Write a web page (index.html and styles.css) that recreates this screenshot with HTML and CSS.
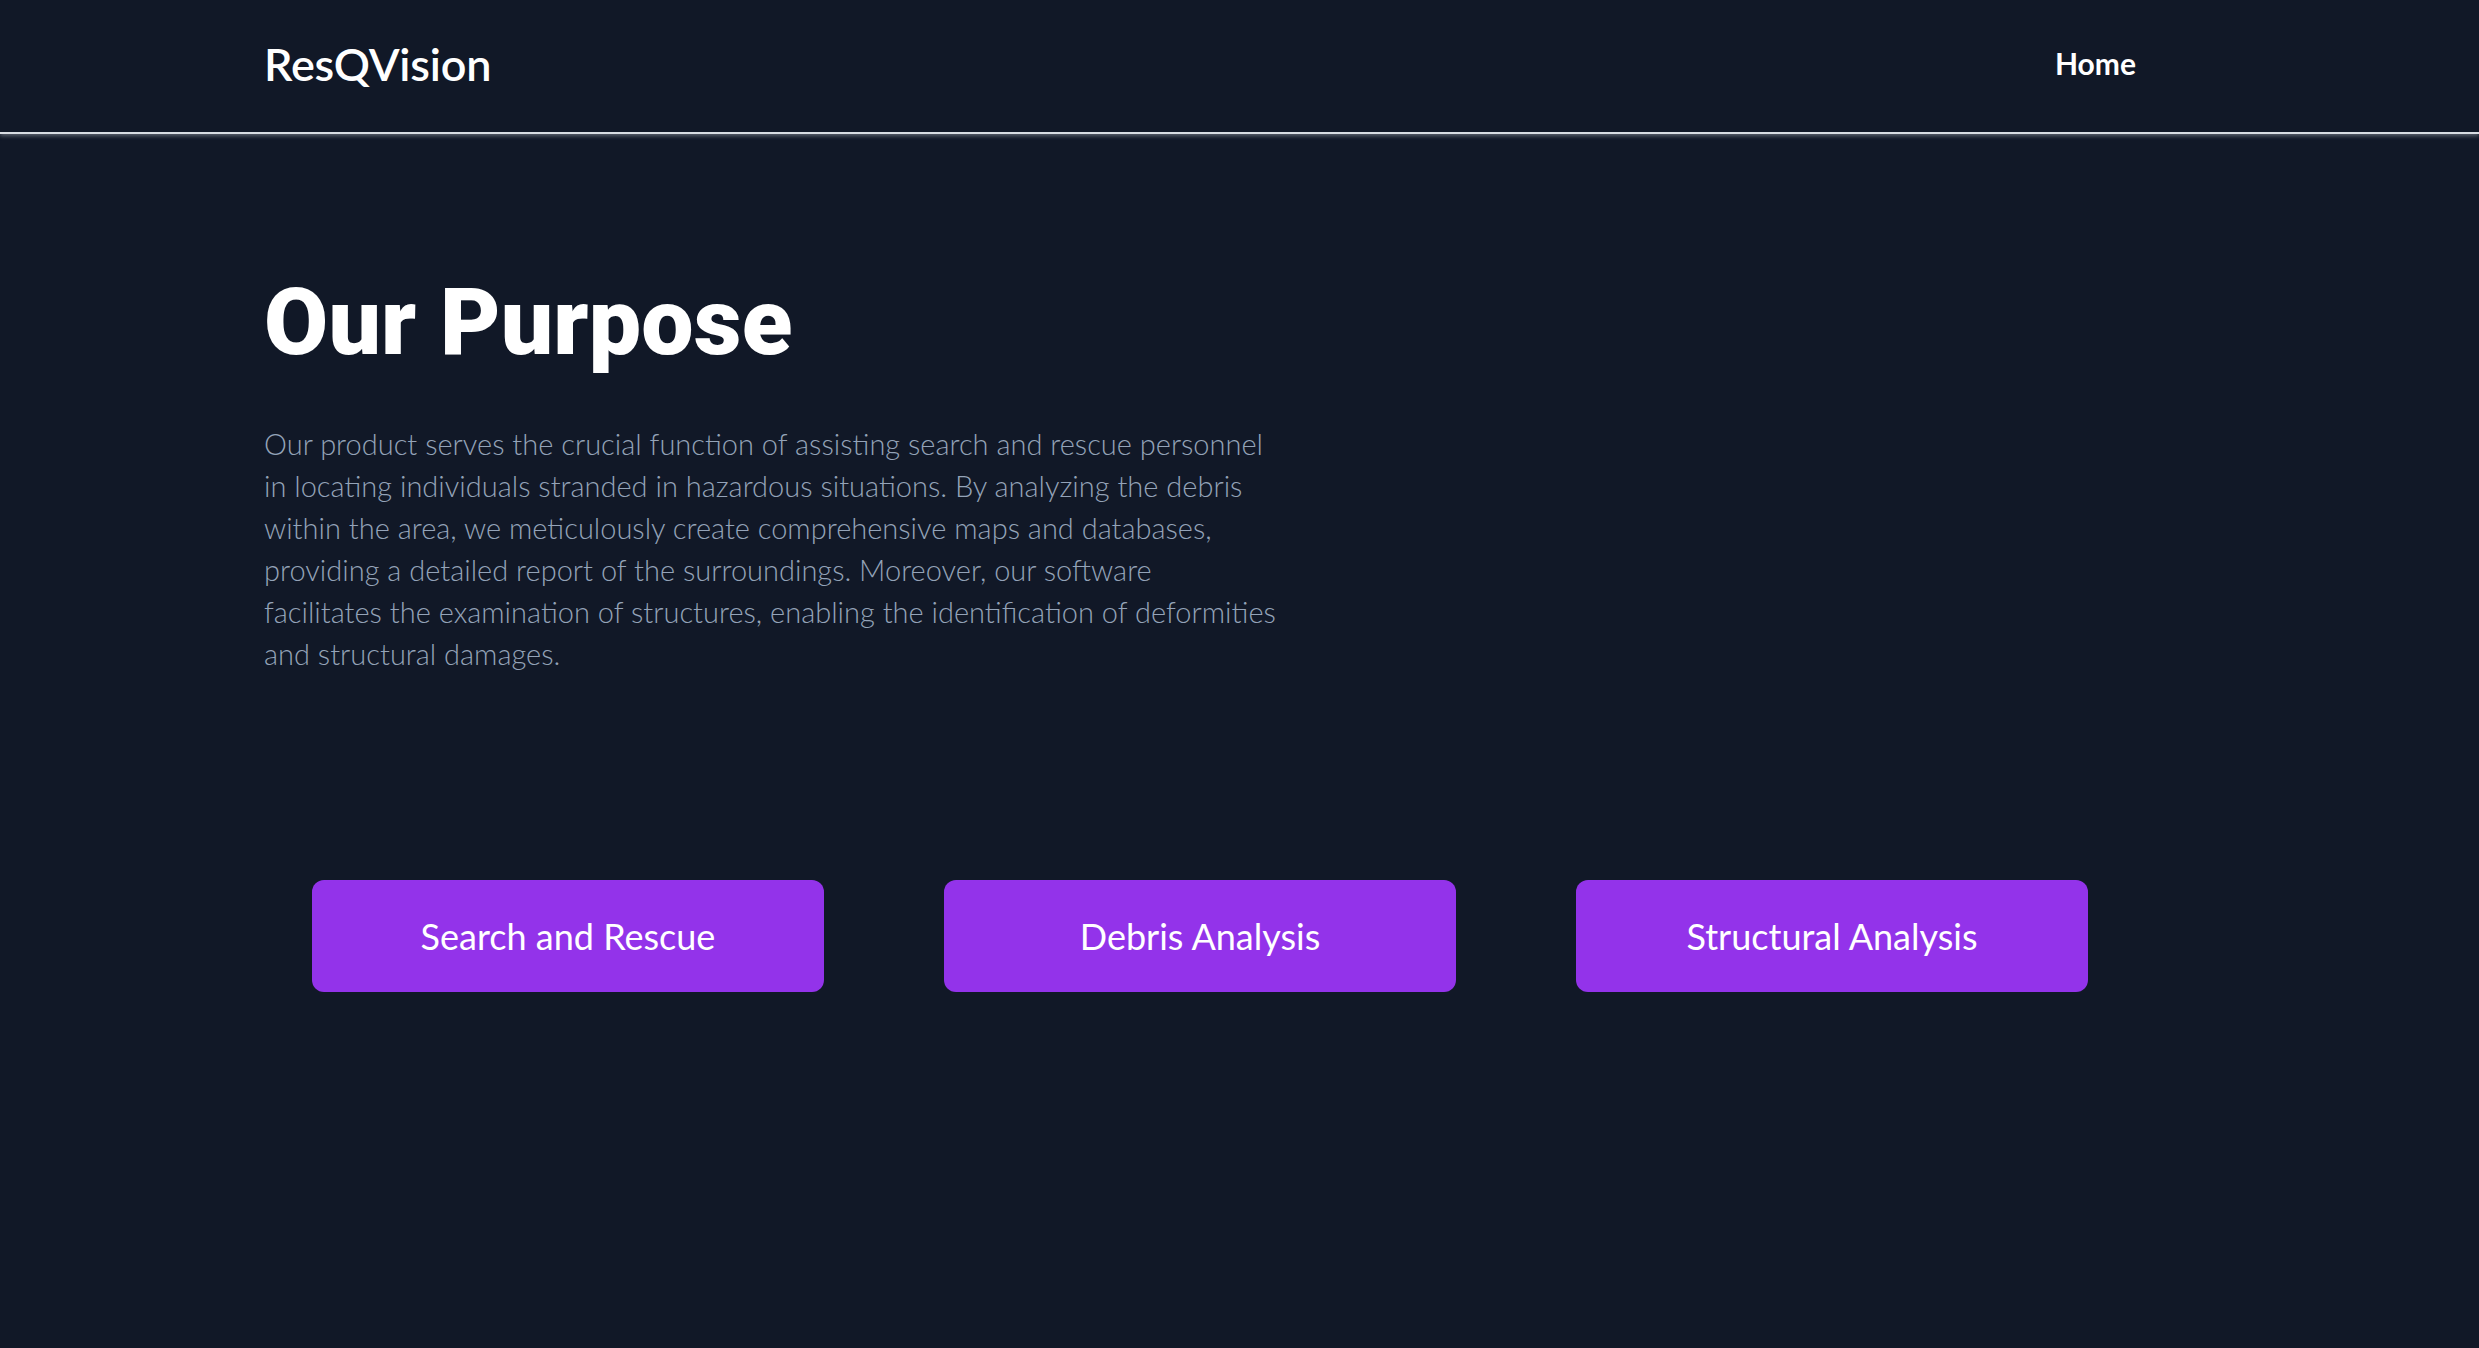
FILE: index.html
```html
<!DOCTYPE html>
<html lang="en">
<head>
<meta charset="utf-8">
<title>ResQVision</title>
<link rel="stylesheet" href="styles.css">
</head>
<body>
<header class="site-header">
  <div class="container header-inner">
    <a class="logo" href="#">ResQVision</a>
    <nav class="nav">
      <a class="nav-link" href="#">Home</a>
    </nav>
  </div>
</header>
<main class="container main">
  <section class="purpose">
    <h1 class="title">Our Purpose</h1>
    <p class="lead">Our product serves the crucial function of assisting search and rescue personnel in locating individuals stranded in hazardous situations. By analyzing the debris within the area, we meticulously create comprehensive maps and databases, providing a detailed report of the surroundings. Moreover, our software facilitates the examination of structures, enabling the identification of deformities and structural damages.</p>
  </section>
  <section class="actions">
    <a class="action-btn" href="#">Search and Rescue</a>
    <a class="action-btn" href="#">Debris Analysis</a>
    <a class="action-btn" href="#">Structural Analysis</a>
  </section>
</main>
</body>
</html>
```
FILE: styles.css
```css
* { box-sizing: border-box; }
html, body {
  margin: 0;
  padding: 0;
}
body {
  background: #111827;
  color: #ffffff;
  font-family: "Lato", "Open Sans", sans-serif;
  min-height: 100vh;
}
a { color: inherit; text-decoration: none; }

.container {
  padding-left: 264px;
  padding-right: 343px;
}

.site-header {
  border-bottom: 2px solid #d8dce2;
  box-shadow: 0 2px 4px rgba(180, 186, 196, 0.45);
}
.header-inner {
  height: 132px;
  display: flex;
  align-items: center;
  justify-content: space-between;
}
.logo {
  font-size: 45px;
  font-weight: 600;
  line-height: 1;
  letter-spacing: -0.2px;
  padding-bottom: 3px;
}
.nav {
  display: flex;
  gap: 40px;
  padding-bottom: 6px;
}
.nav-link {
  font-size: 30px;
  font-weight: 700;
  line-height: 1;
}

.main {
  padding-top: 142px;
}
.title {
  margin: 0;
  font-family: "Roboto", "Lato", sans-serif;
  font-size: 93px;
  font-weight: 900;
  line-height: 1;
  letter-spacing: 0.2px;
}
.lead {
  margin: 54px 0 0;
  max-width: 1012px;
  font-size: 29px;
  font-weight: 300;
  line-height: 42px;
  color: #94a3b8;
}

.actions {
  margin-top: 205px;
  display: flex;
  justify-content: center;
  gap: 120px;
}
.action-btn {
  width: 512px;
  padding: 32px 0;
  background: #9333ea;
  border-radius: 12px;
  text-align: center;
  font-size: 36px;
  line-height: 48px;
  font-weight: 400;
  color: #ffffff;
}
```
